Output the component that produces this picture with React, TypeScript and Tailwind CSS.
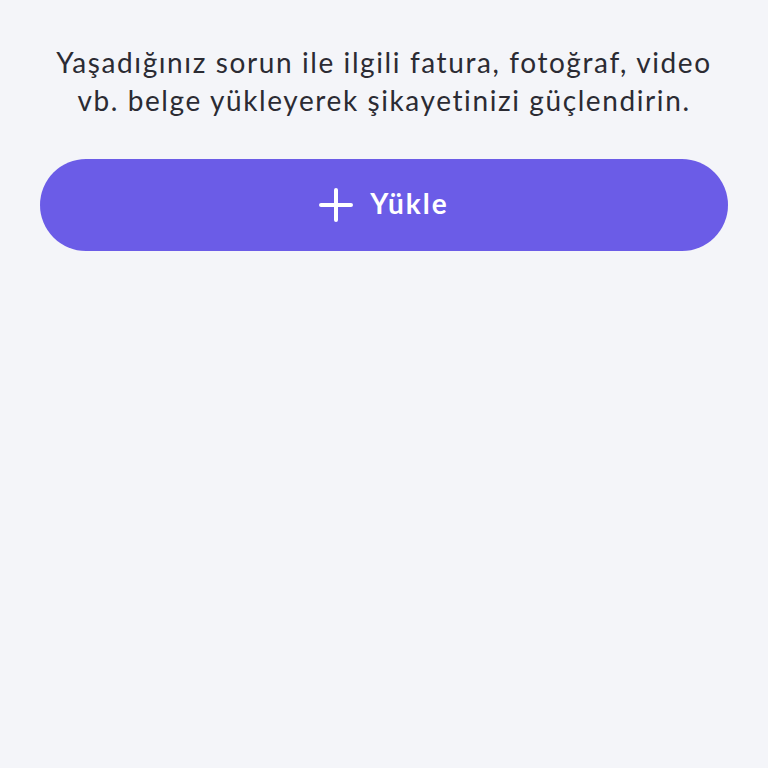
import React from 'react';

export default function App() {
  return (
    <div className="min-h-screen bg-[#f4f5f9] px-10 pt-[43px]" style={{ fontFamily: 'Lato, "Noto Sans", sans-serif' }}>
      <p className="text-center text-[28px] leading-[38px] text-[#2b2b33] tracking-[1.6px]">
        Yaşadığınız sorun ile ilgili fatura, fotoğraf, video vb. belge yükleyerek şikayetinizi güçlendirin.
      </p>
      <button className="mt-[40px] flex h-[92px] w-full items-center justify-center gap-[17px] rounded-full bg-[#6b5ce7] text-white">
        <svg width="34" height="34" viewBox="0 0 34 34" fill="none" stroke="currentColor" strokeWidth="4" strokeLinecap="round">
          <path d="M17 2v30M2 17h30" />
        </svg>
        <span className="mb-[5px] text-[28px] font-bold tracking-[2px] leading-none">Yükle</span>
      </button>
    </div>
  );
}
